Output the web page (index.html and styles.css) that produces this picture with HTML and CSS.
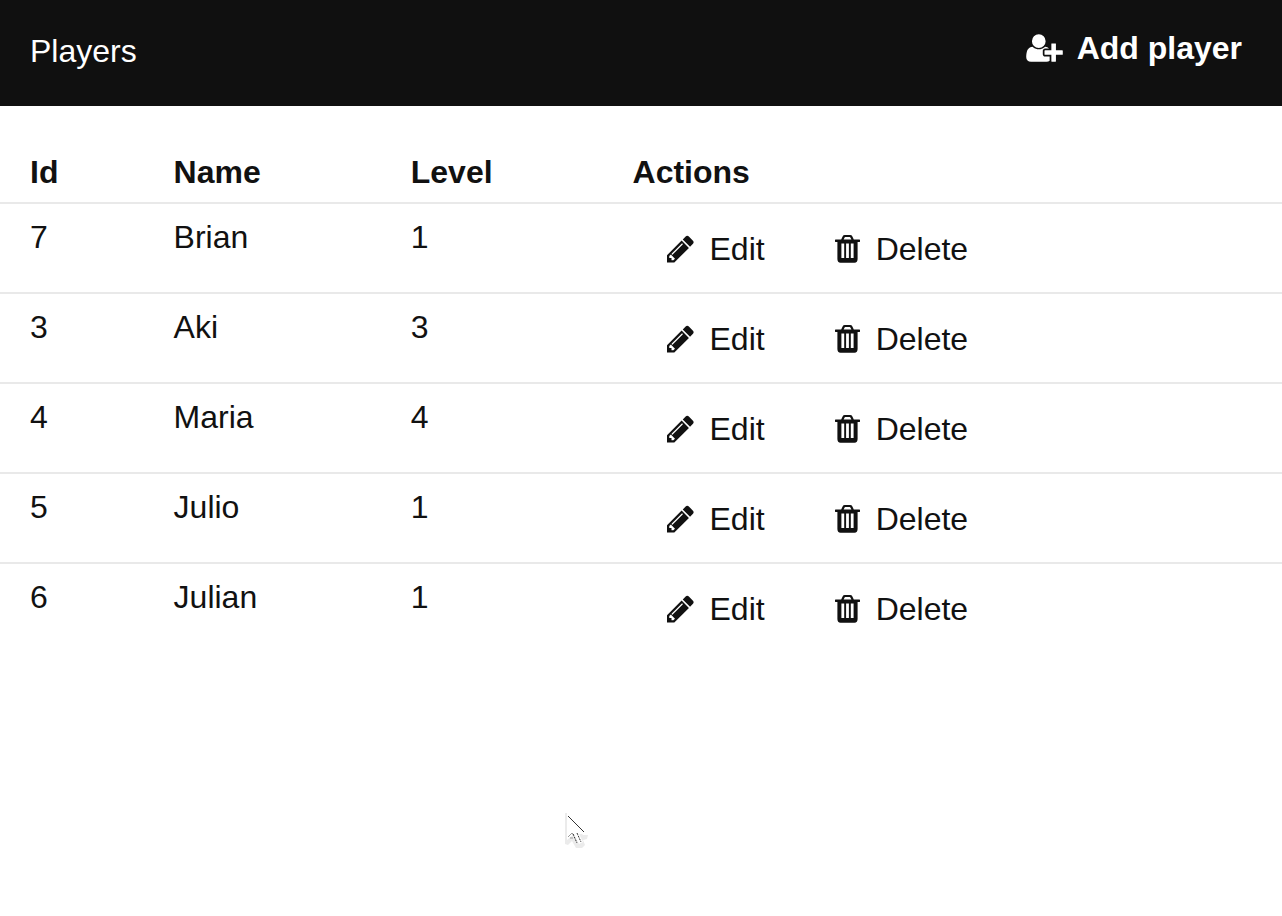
FILE: index.html
```html
<!DOCTYPE html>
<html lang="en">
<head>
<meta charset="utf-8">
<title>Players</title>
<link rel="stylesheet" href="styles.css">
</head>
<body>
<svg class="sprite" aria-hidden="true">
  <symbol id="pencil" viewBox="128 0 1536 1792"><path d="M491 1536l91-91-235-235-91 91v107h128v128h107zM1030 612q0-34-34-34-14 0-24 10l-570 570q-10 10-10 24 0 34 34 34 14 0 24-10l570-570q10-10 10-24zM960 416l416 416-832 832h-416v-416zm683 96q0 53-37 90l-166 166-416-416 166-165q36-38 90-38 53 0 91 38l235 234q37 39 37 91z"/></symbol>
  <symbol id="trash" viewBox="0 0 25 32"><path fill-rule="evenodd" d="M.4 6.600H6.200L7.600 3.400Q8.300 2 9.800 2H15.200Q16.700 2 17.400 3.400L18.800 6.600H24.600Q25 6.600 25 7V8.600Q25 9 24.600 9H22.600V26Q22.600 29.700 19.500 29.700H5.500Q2.400 29.700 2.400 26V9H.4Q0 9 0 8.600V7Q0 6.600 .4 6.600ZM8.600 6.600H16.400L15.400 4.400Q15.200 4 14.800 4H10.200Q9.800 4 9.600 4.400ZM6.400 10.500H9.200V25H6.400ZM11.100 10.500H13.900V25H11.100ZM15.800 10.500H18.600V25H15.800Z"/></symbol>
  <symbol id="user-plus" viewBox="0 0 2048 1792"><path d="M704 896q-159 0-271.500-112.500t-112.500-271.500 112.500-271.500 271.500-112.500 271.500 112.500 112.500 271.500-112.500 271.500-271.500 112.500zm960 128h352q13 0 22.500 9.500t9.500 22.500v192q0 13-9.500 22.500t-22.500 9.500h-352v352q0 13-9.500 22.500t-22.500 9.500h-192q-13 0-22.500-9.500t-9.500-22.500v-352h-352q-13 0-22.500-9.500t-9.500-22.500v-192q0-13 9.500-22.500t22.500-9.500h352v-352q0-13 9.500-22.500t22.500-9.500h192q13 0 22.500 9.500t9.500 22.500v352zm-736 224q0 52 38 90t90 38h256v238q-68 50-171 50h-874q-121 0-194-69t-73-190q0-53 3.500-103.500t14-109 26.500-108.500 43-97.500 62-81 85.500-53.500 111.500-20q19 0 39 17 79 61 154.500 91.500t164.500 30.500 164.500-30.500 154.500-91.500q20-17 39-17 132 0 217 96h-223q-52 0-90 38t-38 90v192z"/></symbol>
</svg>

<header class="navbar">
  <h1 class="title">Players</h1>
  <a class="add" href="#add"><svg class="icon icon-user" aria-hidden="true"><use href="#user-plus"/></svg>Add player</a>
</header>

<main class="content">
  <table class="players">
    <thead>
      <tr><th class="col-id" scope="col">Id</th><th class="col-name" scope="col">Name</th><th class="col-level" scope="col">Level</th><th scope="col">Actions</th></tr>
    </thead>
    <tbody>
      <tr><td>7</td><td>Brian</td><td>1</td><td><div class="actions"><button class="btn" type="button"><svg class="icon icon-pencil" aria-hidden="true"><use href="#pencil"/></svg>Edit</button><button class="btn" type="button"><svg class="icon icon-trash" aria-hidden="true"><use href="#trash"/></svg>Delete</button></div></td></tr>
      <tr><td>3</td><td>Aki</td><td>3</td><td><div class="actions"><button class="btn" type="button"><svg class="icon icon-pencil" aria-hidden="true"><use href="#pencil"/></svg>Edit</button><button class="btn" type="button"><svg class="icon icon-trash" aria-hidden="true"><use href="#trash"/></svg>Delete</button></div></td></tr>
      <tr><td>4</td><td>Maria</td><td>4</td><td><div class="actions"><button class="btn" type="button"><svg class="icon icon-pencil" aria-hidden="true"><use href="#pencil"/></svg>Edit</button><button class="btn" type="button"><svg class="icon icon-trash" aria-hidden="true"><use href="#trash"/></svg>Delete</button></div></td></tr>
      <tr><td>5</td><td>Julio</td><td>1</td><td><div class="actions"><button class="btn" type="button"><svg class="icon icon-pencil" aria-hidden="true"><use href="#pencil"/></svg>Edit</button><button class="btn" type="button"><svg class="icon icon-trash" aria-hidden="true"><use href="#trash"/></svg>Delete</button></div></td></tr>
      <tr><td>6</td><td>Julian</td><td>1</td><td><div class="actions"><button class="btn" type="button"><svg class="icon icon-pencil" aria-hidden="true"><use href="#pencil"/></svg>Edit</button><button class="btn" type="button"><svg class="icon icon-trash" aria-hidden="true"><use href="#trash"/></svg>Delete</button></div></td></tr>
    </tbody>
  </table>
</main>

<svg class="cursor" viewBox="0 0 28 40" aria-hidden="true">
  <path d="M1 2V33l3 1 4-4 4 7h6l3-3-2-5 4-1 1-4H19L3 6V2z" fill="#ebebeb"/>
  <path d="M3 4V29l7-6 5 10 4-2-4-8h7z" fill="#fff"/>
  <path d="M4 5l16 16" stroke="#333"/>
  <path d="M4 26l4-4 2 2M6 27h3" fill="none" stroke="#999"/>
  <path d="M9 23l4 9M13 22l4 9" stroke="#333" stroke-dasharray="2 1"/>
</svg>
</body>
</html>
```

FILE: styles.css
```css
* {
  box-sizing: border-box;
}

body {
  margin: 0;
  background: #fff;
  color: #111;
  font-family: "Liberation Sans", Arial, sans-serif;
  font-size: 32px;
  line-height: 48px;
}

.sprite {
  display: none;
}

.navbar {
  display: flex;
  justify-content: space-between;
  align-items: flex-start;
  padding: 24px 40px 31px 30px;
  background: #101010;
  color: #fff;
}

.title {
  margin: 0;
  padding-top: 3px;
  font-size: 32px;
  font-weight: 400;
}

.add {
  display: flex;
  align-items: center;
  gap: 14px;
  color: #fff;
  font-weight: 700;
  text-decoration: none;
}

.icon {
  height: 32px;
  flex: none;
  fill: currentColor;
}

.icon-user {
  width: 37px;
}

.icon-pencil {
  width: 27px;
}

.icon-trash {
  width: 25px;
}

.content {
  padding-top: 32px;
}

.players {
  width: 100%;
  border-collapse: collapse;
  table-layout: fixed;
}

.players th,
.players td {
  padding: 9px 0 7px 30px;
  text-align: left;
  vertical-align: top;
}

.players th {
  padding-top: 10px;
  padding-bottom: 6px;
}

.players td {
  border-top: 2px solid #e9e9e9;
}

.col-id {
  width: 11.2%;
}

.col-name {
  width: 18.5%;
}

.col-level {
  width: 17.3%;
}

.actions {
  display: flex;
  gap: 2px;
}

.btn {
  display: flex;
  align-items: center;
  gap: 16px;
  padding: 16px 34px;
  border: 0;
  background: none;
  color: inherit;
  font: inherit;
  line-height: 40px;
}

.cursor {
  position: fixed;
  left: 564px;
  top: 811px;
  width: 28px;
  height: 40px;
  pointer-events: none;
}
```
